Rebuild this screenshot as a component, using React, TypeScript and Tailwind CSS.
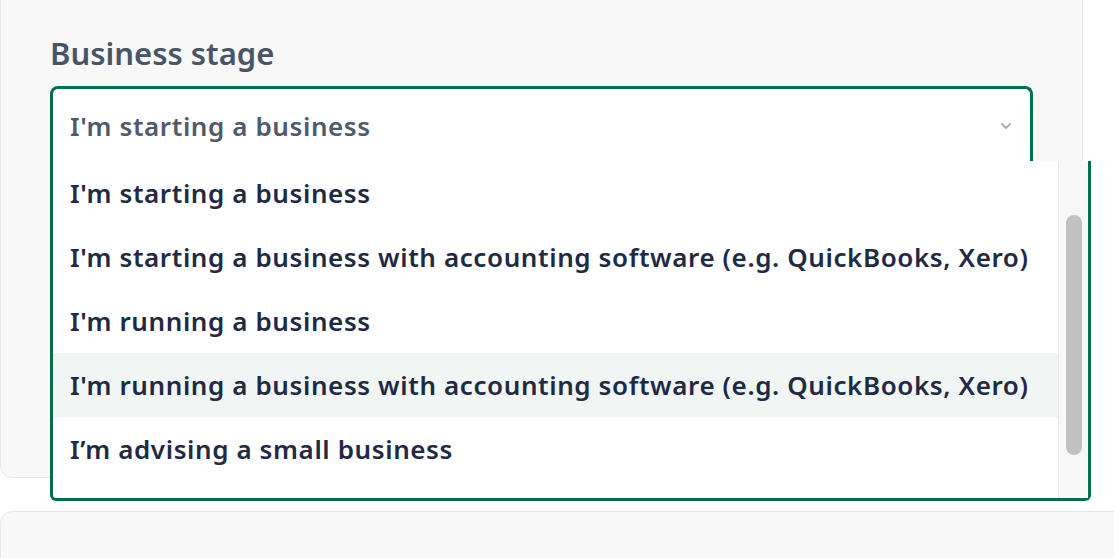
import { ChevronDown } from 'lucide-react';

const options = [
  "I'm starting a business",
  "I'm starting a business with accounting software (e.g. QuickBooks, Xero)",
  "I'm running a business",
  "I'm running a business with accounting software (e.g. QuickBooks, Xero)",
  'I’m advising a small business',
];

export default function App() {
  return (
    <div
      className="relative h-[558px] w-[1114px] overflow-hidden bg-white"
      style={{ fontFamily: '"Noto Sans", sans-serif' }}
    >
      {/* Form card */}
      <div className="-mt-4 w-[1083px] rounded-b-xl border border-[#e6e8e6] bg-[#f7f8f7] pl-[49px] pr-[49px] pt-[50px] h-[494px]">
        <label className="block text-[31px] leading-[36px] font-semibold text-[#4a5468]">
          Business stage
        </label>
        <div className="mt-[15px] flex h-[77px] items-center justify-between rounded-t-lg border-[3px] border-b-0 border-[#006e50] bg-white pl-[17px] pr-[16px]">
          <span className="text-[26px] tracking-[0.6px] font-semibold text-[#4f5a6c]">I'm starting a business</span>
          <ChevronDown className="h-4 w-4 text-[#a9b1ba]" strokeWidth={3} />
        </div>
      </div>

      {/* Open listbox */}
      <div className="absolute left-[50px] top-[161px] flex h-[340px] w-[1041px] rounded-b-md border-x-[3px] border-b-[3px] border-[#006e50] bg-white">
        <ul className="flex-1">
          {options.map((opt, i) => (
            <li
              key={opt}
              className={`flex h-[64px] items-center pl-[17px] text-[26px] tracking-[0.6px] font-semibold text-[#1f2a44] ${
                i === 3 ? 'bg-[#f1f6f4]' : ''
              }`}
            >
              {opt}
            </li>
          ))}
        </ul>
        <div className="w-[30px] border-l border-[#e8e8e8] bg-[#f8f8f8] pt-[54px] pl-[7px]">
          <div className="h-[240px] w-[16px] rounded-full bg-[#c1c1c1]" />
        </div>
      </div>

      {/* Next card */}
      <div className="mt-[33px] h-[80px] w-[1130px] rounded-t-xl border border-[#e6e8e6] bg-[#f7f8f7]" />
    </div>
  );
}
